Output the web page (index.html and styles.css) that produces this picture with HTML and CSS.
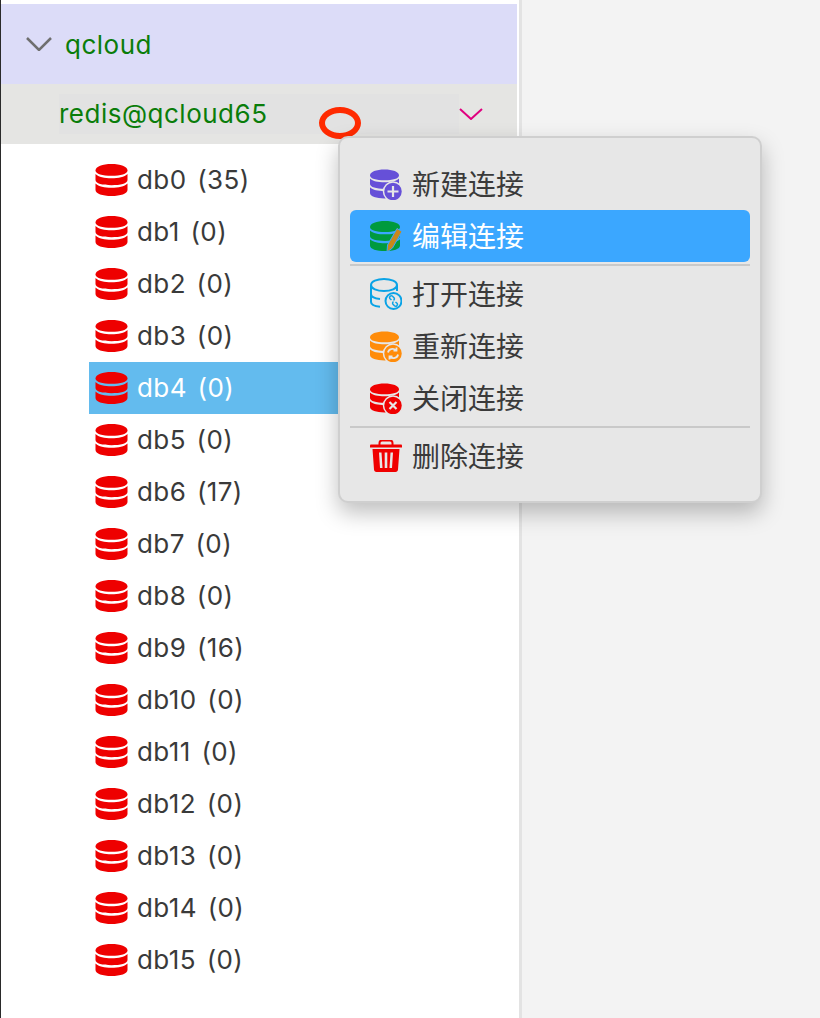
FILE: index.html
```html
<!DOCTYPE html>
<html>

<head>
  <title>Redis connections</title>
  <link rel="stylesheet" href="styles.css">
</head>

<body>
  <svg class="defs" width="0" height="0">
    <symbol id="db" viewBox="0 0 32 32">
      <path d="M0 6.500C0 2.500 7 0 16 0S32 2.500 32 6.500C32 10 25 11.800 16 11.800S0 10 0 6.500Z" />
      <path d="M0 10C3 13 9 14.200 16 14.200S29 13 32 10V16C32 19.500 25 21.200 16 21.200S0 19.500 0 16Z" />
      <path d="M0 19.500C3 22.500 9 23.700 16 23.700S29 22.500 32 19.500V26C32 29.800 25 32 16 32S0 29.800 0 26Z" />
    </symbol>
    <symbol id="trash" viewBox="0 0 32 32">
      <path d="M9.500 5V3C9.500 1.500 10.500 .5 12 .5H20C21.500 .5 22.500 1.500 22.500 3V5" fill="none" stroke="#f00000" stroke-width="2" />
      <path d="M1 4.500H31C31.800 4.500 32 5.200 32 6V7.500H0V6C0 5.200 .2 4.500 1 4.500Z" fill="#f00000" />
      <path fill-rule="evenodd" fill="#f00000" d="M2.500 9H29.500L28 29.500C27.900 31 27 32 25.500 32H6.500C5 32 4.100 31 4 29.500ZM9 12.500L10 28H12.500L11.500 12.500ZM14.700 12.500V28H17.300V12.500ZM20.500 12.500L19.500 28H22L23 12.500Z" />
    </symbol>
  </svg>

  <div class="app">
    <aside class="sidebar">
      <div class="conn-head">
        <svg class="chevron" viewBox="0 0 26 14"><path d="M1 1L13 13L25 1" /></svg>
        <span class="conn-name">qcloud</span>
      </div>
      <div class="server-row">
        <div class="server-label">redis@qcloud65</div>
        <svg class="chevron-small" viewBox="0 0 24 12"><path d="M1 1L12 11L23 1" /></svg>
      </div>
      <ul class="db-list">
        <li class="db-row"><svg class="db-icon"><use href="#db" /></svg><span class="db-label">db0 (35)</span></li>
        <li class="db-row"><svg class="db-icon"><use href="#db" /></svg><span class="db-label">db1 (0)</span></li>
        <li class="db-row"><svg class="db-icon"><use href="#db" /></svg><span class="db-label">db2 (0)</span></li>
        <li class="db-row"><svg class="db-icon"><use href="#db" /></svg><span class="db-label">db3 (0)</span></li>
        <li class="db-row selected"><svg class="db-icon"><use href="#db" /></svg><span class="db-label">db4 (0)</span></li>
        <li class="db-row"><svg class="db-icon"><use href="#db" /></svg><span class="db-label">db5 (0)</span></li>
        <li class="db-row"><svg class="db-icon"><use href="#db" /></svg><span class="db-label">db6 (17)</span></li>
        <li class="db-row"><svg class="db-icon"><use href="#db" /></svg><span class="db-label">db7 (0)</span></li>
        <li class="db-row"><svg class="db-icon"><use href="#db" /></svg><span class="db-label">db8 (0)</span></li>
        <li class="db-row"><svg class="db-icon"><use href="#db" /></svg><span class="db-label">db9 (16)</span></li>
        <li class="db-row"><svg class="db-icon"><use href="#db" /></svg><span class="db-label">db10 (0)</span></li>
        <li class="db-row"><svg class="db-icon"><use href="#db" /></svg><span class="db-label">db11 (0)</span></li>
        <li class="db-row"><svg class="db-icon"><use href="#db" /></svg><span class="db-label">db12 (0)</span></li>
        <li class="db-row"><svg class="db-icon"><use href="#db" /></svg><span class="db-label">db13 (0)</span></li>
        <li class="db-row"><svg class="db-icon"><use href="#db" /></svg><span class="db-label">db14 (0)</span></li>
        <li class="db-row"><svg class="db-icon"><use href="#db" /></svg><span class="db-label">db15 (0)</span></li>
      </ul>
    </aside>
    <main class="content"></main>
  </div>

  <!-- annotation drawn on the screenshot -->
  <div class="cursor-mark"></div>

  <div class="menu">
    <div class="menu-item">
      <svg class="menu-icon purple" viewBox="0 0 32 32">
        <use href="#db" width="29" height="32" />
        <circle class="badge" cx="23" cy="23.500" r="9.500" />
        <path d="M23 18V29M17.500 23.500H28.500" fill="none" stroke="#e7e7e7" stroke-width="2.200" />
      </svg>
      <span class="menu-label">新建连接</span>
    </div>
    <div class="menu-item active">
      <svg class="menu-icon green" viewBox="0 0 32 32">
        <use href="#db" width="30" height="32" />
        <path d="M17.500 25L27 8.500L32 11.500L22.500 28L17 32Z" fill="#c8881a" stroke="#3ba7ff" stroke-width="1" />
      </svg>
      <span class="menu-label">编辑连接</span>
    </div>
    <div class="menu-sep"></div>
    <div class="menu-item">
      <svg class="menu-icon blue" viewBox="0 0 32 32">
        <path d="M1 7C1 3.500 7 1 14 1S27 3.500 27 7V13M1 7V24C1 26.500 5 28.300 10 28.800M1 7C1 10.500 7 13 14 13S27 10.500 27 7M1 16C1 18.500 5 20.500 10 21" fill="none" stroke-width="2" />
        <circle cx="23.500" cy="23" r="8" fill="#e7e7e7" stroke-width="2" />
        <path d="M21.500 22L19.800 20.500C18.800 19 20.800 17 22.300 18L24 19.700C24.800 20.800 24.300 21.800 23.500 22.300M25.500 24L27.200 25.500C28.200 27 26.200 29 24.700 28L23 26.300C22.200 25.200 22.700 24.200 23.500 23.700" fill="none" stroke-width="1.500" />
      </svg>
      <span class="menu-label">打开连接</span>
    </div>
    <div class="menu-item">
      <svg class="menu-icon orange" viewBox="0 0 32 32">
        <use href="#db" width="29" height="32" />
        <circle class="badge" cx="23" cy="23.500" r="9.500" />
        <path d="M18 22.500C18.500 19 23 17.500 26.500 20.500M26.500 17.500V20.500H23.500M28 24.500C27.500 28 23 29.500 19.500 26.500M19.500 29.500V26.500H22.500" fill="none" stroke="#e7e7e7" stroke-width="1.800" />
      </svg>
      <span class="menu-label">重新连接</span>
    </div>
    <div class="menu-item">
      <svg class="menu-icon red" viewBox="0 0 32 32">
        <use href="#db" width="29" height="32" />
        <circle class="badge" cx="23" cy="23.500" r="9.500" />
        <path d="M19.500 20L26.500 27M26.500 20L19.500 27" fill="none" stroke="#e7e7e7" stroke-width="2.200" />
      </svg>
      <span class="menu-label">关闭连接</span>
    </div>
    <div class="menu-sep"></div>
    <div class="menu-item">
      <svg class="menu-icon"><use href="#trash" /></svg>
      <span class="menu-label">删除连接</span>
    </div>
  </div>
</body>

</html>
```

FILE: styles.css
```css
html,
body {
  margin: 0;
  height: 100%;
  overflow: hidden;
}

body {
  position: relative;
  font-family: Inter, "Noto Sans CJK SC", sans-serif;
  color: #3a3a3a;
}

.defs {
  display: block;
  height: 0;
}

.app {
  display: flex;
  height: 1018px;
}

.sidebar {
  box-sizing: border-box;
  width: 522px;
  padding-top: 4px;
  padding-right: 2px;
  background-color: #fff;
  border-left: 1px solid #2a2a2a;
  border-right: 3px solid #e3e3e3;
}

.content {
  flex: 1;
  background-color: #f3f3f3;
}

.conn-head {
  display: flex;
  align-items: center;
  height: 80px;
  padding-left: 25px;
  background-color: #dcdcf8;
}

.conn-name {
  margin-left: 13px;
  font-size: 26px;
  letter-spacing: 0.5px;
  color: #0a7d0a;
}

.chevron {
  width: 26px;
  height: 14px;
  fill: none;
  stroke: #6f6f6f;
  stroke-width: 2.5;
}

.server-row {
  display: flex;
  align-items: center;
  height: 60px;
  padding-left: 58px;
  background-color: #e5e5e3;
}

.server-label {
  width: 400px;
  height: 40px;
  line-height: 40px;
  font-size: 26px;
  letter-spacing: 0.5px;
  color: #0a7d0a;
  background-color: #e2e2e2;
}

.chevron-small {
  width: 24px;
  height: 12px;
  fill: none;
  stroke: #e0007f;
  stroke-width: 2;
}

.db-list {
  margin: 10px 0 0 88px;
  padding: 0;
  list-style: none;
}

.db-row {
  display: flex;
  align-items: center;
  height: 52px;
  padding-left: 6px;
  font-size: 26px;
  letter-spacing: 0.4px;
  word-spacing: 3px;
}

.db-label {
  margin-top: -2px;
}

.db-row.selected {
  color: #fff;
  background-color: #63bbee;
}

.db-icon {
  width: 33px;
  height: 32px;
  margin-right: 9px;
  fill: #ee0000;
}

.cursor-mark {
  position: absolute;
  left: 319px;
  top: 107px;
  box-sizing: border-box;
  width: 42px;
  height: 32px;
  border: 6px solid #ff2a00;
  border-radius: 50%;
}

.menu {
  position: absolute;
  left: 338px;
  top: 136px;
  box-sizing: border-box;
  width: 424px;
  height: 367px;
  padding: 20px 10px;
  background-color: #e7e7e7;
  border: 2px solid #cfcfcf;
  border-radius: 10px;
  box-shadow: 0 10px 22px rgba(0, 0, 0, 0.25);
}

.menu-item {
  display: flex;
  align-items: center;
  height: 52px;
  padding-left: 20px;
  font-size: 28px;
  border-radius: 6px;
}

.menu-label {
  margin-top: -2px;
}

.menu-item.active {
  color: #fff;
  background-color: #3ba7ff;
}

.menu-sep {
  height: 2px;
  margin: 2px 0;
  background-color: #c9c9c9;
}

.menu-icon {
  flex: none;
  width: 32px;
  height: 32px;
  margin-right: 10px;
}

.menu-icon .badge {
  stroke: #e7e7e7;
  stroke-width: 1.5;
}

.purple {
  fill: #6650d8;
}

.green {
  fill: #009a3e;
}

.blue {
  stroke: #0aa3e6;
}

.orange {
  fill: #ff8c0a;
}

.red {
  fill: #f00000;
}
```
